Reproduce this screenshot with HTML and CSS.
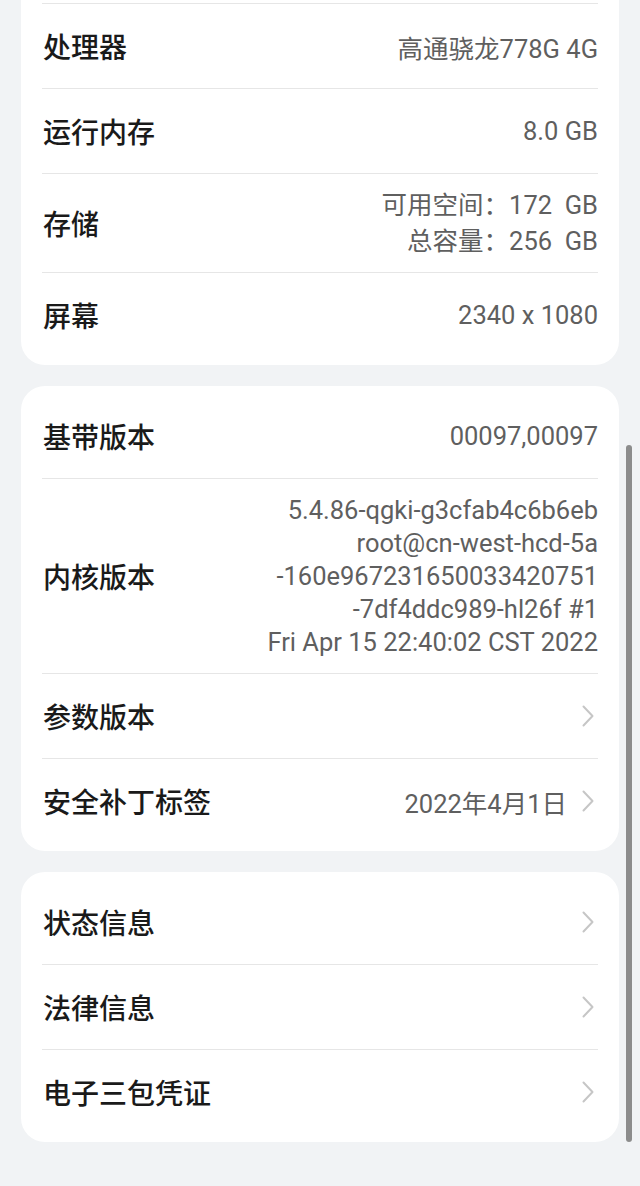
FILE: index.html
```html
<!DOCTYPE html>
<html lang="zh-CN">
<head>
    <meta charset="utf-8"/>
    <title>关于手机</title>
    <meta name="viewport" content="width=device-width, initial-scale=1">
    <link rel="stylesheet" href="styles.css">
</head>
<body>
<div class="page">
    <div class="card cut">
        <div class="row first">
            <span class="label">处理器</span>
            <span class="value">高通骁龙778G 4G</span>
        </div>
        <div class="row">
            <span class="label">运行内存</span>
            <span class="value">8.0 GB</span>
        </div>
        <div class="row tall">
            <span class="label">存储</span>
            <span class="value lines">可用空间：172&nbsp;&nbsp;GB<br>总容量：256&nbsp;&nbsp;GB</span>
        </div>
        <div class="row">
            <span class="label">屏幕</span>
            <span class="value">2340 x 1080</span>
        </div>
    </div>

    <div class="card">
        <div class="row">
            <span class="label">基带版本</span>
            <span class="value">00097,00097</span>
        </div>
        <div class="row kernel">
            <span class="label">内核版本</span>
            <span class="value lines">5.4.86-qgki-g3cfab4c6b6eb<br>root@cn-west-hcd-5a<br>-160e967231650033420751<br>-7df4ddc989-hl26f #1<br>Fri Apr 15 22:40:02 CST 2022</span>
        </div>
        <div class="row">
            <span class="label">参数版本</span>
            <svg class="chevron" width="12" height="22" viewBox="0 0 12 22"><polyline points="1.5,1.5 10.5,11 1.5,20.5" fill="none" stroke="#c6c6c6" stroke-width="2" stroke-linecap="round" stroke-linejoin="round"/></svg>
        </div>
        <div class="row">
            <span class="label">安全补丁标签</span>
            <span class="value link">2022年4月1日</span>
            <svg class="chevron" width="12" height="22" viewBox="0 0 12 22"><polyline points="1.5,1.5 10.5,11 1.5,20.5" fill="none" stroke="#c6c6c6" stroke-width="2" stroke-linecap="round" stroke-linejoin="round"/></svg>
        </div>
    </div>

    <div class="card">
        <div class="row">
            <span class="label">状态信息</span>
            <svg class="chevron" width="12" height="22" viewBox="0 0 12 22"><polyline points="1.5,1.5 10.5,11 1.5,20.5" fill="none" stroke="#c6c6c6" stroke-width="2" stroke-linecap="round" stroke-linejoin="round"/></svg>
        </div>
        <div class="row">
            <span class="label">法律信息</span>
            <svg class="chevron" width="12" height="22" viewBox="0 0 12 22"><polyline points="1.5,1.5 10.5,11 1.5,20.5" fill="none" stroke="#c6c6c6" stroke-width="2" stroke-linecap="round" stroke-linejoin="round"/></svg>
        </div>
        <div class="row">
            <span class="label">电子三包凭证</span>
            <svg class="chevron" width="12" height="22" viewBox="0 0 12 22"><polyline points="1.5,1.5 10.5,11 1.5,20.5" fill="none" stroke="#c6c6c6" stroke-width="2" stroke-linecap="round" stroke-linejoin="round"/></svg>
        </div>
    </div>
</div>
<div class="scrollbar"></div>
</body>
</html>
```

FILE: styles.css
```css
html {
    font-family: "Noto Sans CJK SC", sans-serif;
}
body {
    margin: 0;
    background: #f1f3f5;
}
.page {
    display: flex;
    flex-direction: column;
    gap: 21px;
    padding: 0 21px 40px 21px;
}
.card {
    background: #fff;
    border-radius: 24px;
    padding: 8px 21px;
}
.card.cut {
    border-top-left-radius: 0;
    border-top-right-radius: 0;
    padding-top: 3px;
}
.row {
    display: flex;
    align-items: center;
    min-height: 84px;
}
.row + .row,
.row.first {
    border-top: 1px solid #e6e6e6;
}
.row.tall {
    min-height: 98px;
}
.row.kernel {
    min-height: 194px;
}
.label {
    font-size: 28px;
    font-weight: 500;
    color: #1a1a1a;
    padding-left: 1px;
}
.value {
    margin-left: auto;
    font-family: Roboto, "Noto Sans CJK SC", sans-serif;
    font-size: 25.5px;
    color: #5f5f5f;
    text-align: right;
}
.value.lines {
    line-height: 36px;
}
.row.kernel .value {
    line-height: 33px;
}
.value.link {
    margin-right: 15px;
}
.chevron {
    margin-left: auto;
    margin-right: 4px;
}
.value.link + .chevron {
    margin-left: 0;
}
.scrollbar {
    position: fixed;
    top: 445px;
    right: 8px;
    width: 6px;
    height: 697px;
    border-radius: 3px;
    background: #8c8c8c;
}
```
